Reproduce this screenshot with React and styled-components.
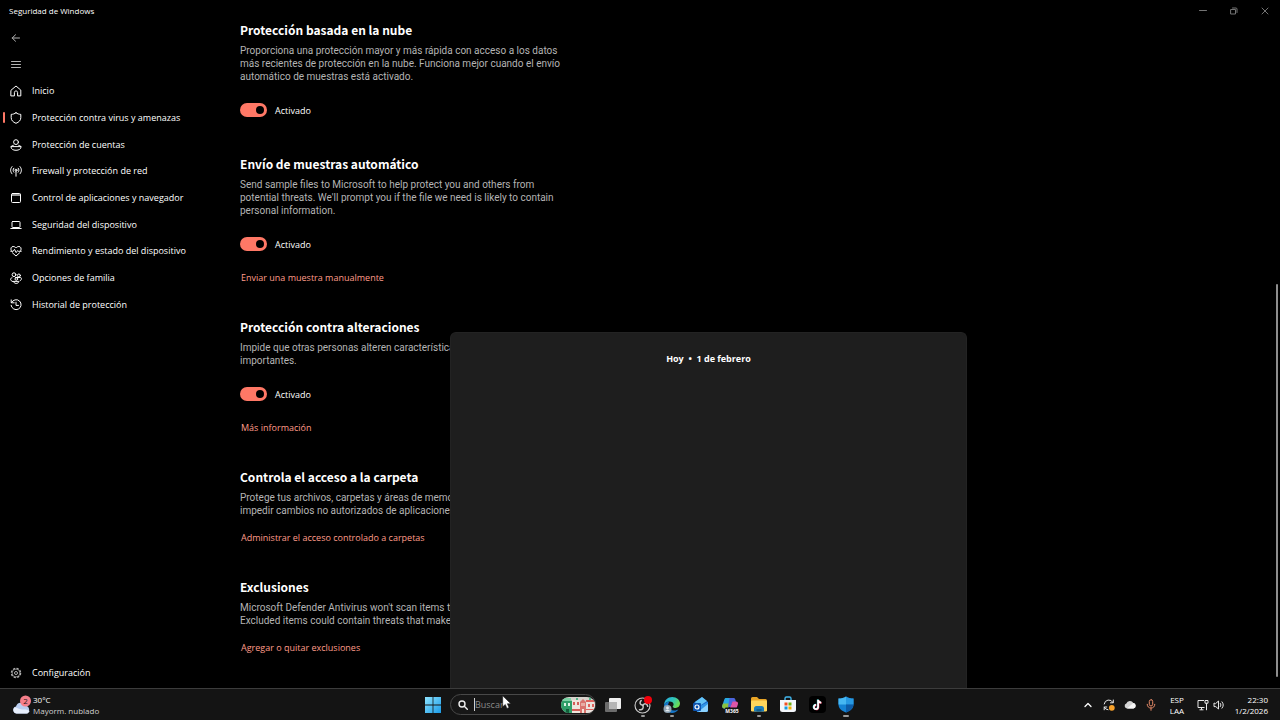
import React from "react";
import styled, { createGlobalStyle } from "styled-components";

const GlobalStyle = createGlobalStyle`
  *, *::before, *::after { box-sizing: border-box; }
  body {
    margin: 0;
    background: #000;
    color: #fff;
    font-family: "Open Sans", "Noto Sans", sans-serif;
    font-size: 9px;
  }
  button { font: inherit; color: inherit; background: none; border: 0; padding: 0; }
  h1, h2, p, ul { margin: 0; padding: 0; }
  ul { list-style: none; }
`;

const Desktop = styled.div`
  position: relative;
  display: flex;
  flex-direction: column;
  min-height: 100vh;
  overflow: hidden;
`;

const TitleBar = styled.header`
  display: flex;
  justify-content: space-between;
  align-items: center;
  height: 20px;
  padding-top: 2px;
`;

const WindowTitle = styled.h1`
  padding-left: 9px;
  font-size: 8px;
  line-height: 12px;
  font-weight: 500;
`;

const WindowControls = styled.div`
  display: flex;
`;

const WindowButton = styled.button`
  display: grid;
  place-items: center;
  width: 31px;
  height: 18px;
  color: #747474;
`;

const WindowBody = styled.div`
  flex: 1;
  display: grid;
  grid-template-columns: 240px minmax(0, 1fr) 4px;
`;

const Sidebar = styled.aside`
  display: flex;
  flex-direction: column;
  padding: 4px 0 2px;
`;

const SidebarButton = styled.button`
  display: flex;
  align-items: center;
  height: 27px;
  padding-left: 10px;
  color: #b4b4b4;
`;

const NavList = styled.ul`
  display: grid;
  grid-auto-rows: 1fr;
  height: 240px;
`;

const NavItem = styled.li`
  display: grid;
`;

const NavLink = styled.a`
  display: flex;
  align-items: center;
  gap: 10px;
  padding-left: ${(p) => (p.$active ? 3 : 10)}px;
  color: #fff;
  font-size: 9px;
  line-height: 14px;
  font-weight: 500;
  text-decoration: none;

  &::before {
    content: "";
    display: ${(p) => (p.$active ? "block" : "none")};
    width: 2px;
    height: 11px;
    margin-right: -5px;
    border-radius: 1px;
    background: #ff7866;
  }
`;

const SidebarFooter = styled.div`
  display: grid;
  height: 27px;
  margin-top: auto;
`;

const Content = styled.main`
  display: flex;
  flex-direction: column;
  gap: 32px;
  padding-bottom: 32px;
`;

const Section = styled.section`
  display: flex;
  flex-direction: column;
  align-items: flex-start;
`;

const SectionTitle = styled.h2`
  font-family: "Noto Sans CJK SC", "Noto Sans", sans-serif;
  font-size: 12px;
  line-height: 20px;
  font-weight: 600;
`;

const Description = styled.p`
  margin-top: 4px;
  color: #b4b4b4;
  font-family: Roboto, sans-serif;
  font-size: 10px;
  line-height: 13px;
  white-space: pre-line;
`;

const ToggleLabel = styled.label`
  display: flex;
  align-items: center;
  gap: 8px;
  height: 24px;
  margin-top: 15px;
  font-weight: 500;
`;

const ToggleInput = styled.input`
  appearance: none;
  display: flex;
  align-items: center;
  width: 27px;
  height: 14px;
  margin: 0;
  padding: 0 3px;
  border-radius: 7px;
  background: #ff7866;

  &::before {
    content: "";
    width: 8px;
    height: 8px;
    border-radius: 50%;
    background: #000;
  }
  &:checked::before { margin-left: auto; }
`;

const ActionLink = styled.a`
  margin-top: ${(p) => (p.$afterToggle ? 15 : 14)}px;
  padding-left: 1px;
  color: #ff9c8a;
  line-height: 14px;
  text-decoration: none;
`;

const ScrollRail = styled.div`
  display: grid;
  grid-template-rows: 264fr 393fr 11fr;
`;

const ScrollThumb = styled.div`
  grid-row: 2;
  width: 2px;
  border-radius: 1px;
  background: #8e8e8e;
`;

const Flyout = styled.aside`
  position: absolute;
  left: 450px;
  bottom: 32px;
  width: 517px;
  height: 356px;
  padding-top: 19px;
  border: 1px solid #232323;
  border-bottom: 0;
  border-radius: 6px 6px 0 0;
  background: #1e1e1e;
  text-align: center;
`;

const FlyoutTitle = styled.h2`
  font-size: 9px;
  line-height: 14px;
  font-weight: 700;
`;

const Taskbar = styled.footer`
  position: relative;
  display: grid;
  grid-template-columns: 1fr auto 1fr;
  align-items: center;
  height: 32px;
  border-top: 1px solid #3c3c3c;
  background: #141414;
`;

const Weather = styled.button`
  display: flex;
  align-items: center;
  justify-self: start;
  gap: 1px;
  padding-left: 12px;
  font-size: 8px;
  line-height: 11px;
  text-align: left;
`;

const WeatherTemp = styled.span`
  display: block;
  font-weight: 500;
`;

const WeatherState = styled.span`
  display: block;
  color: #d0d0d0;
`;

const TaskbarCenter = styled.div`
  display: flex;
  align-items: center;
  gap: 3px;
`;

const StartButton = styled.button`
  display: grid;
  place-items: center;
  width: 28px;
  height: 31px;
`;

const SearchBox = styled.label`
  display: flex;
  align-items: center;
  width: 146px;
  height: 21px;
  padding: 0 0 0 7px;
  border: 1px solid #484848;
  border-radius: 11px;
  background: #171717;
`;

const SearchInput = styled.input`
  flex: 1;
  min-width: 0;
  height: 13px;
  margin-left: 6px;
  padding: 0;
  border: 0;
  border-left: 1px solid #d0d0d0;
  outline: 0;
  background: none;
  color: #fff;
  font: inherit;

  &::placeholder { color: #8a8a8a; }
`;

const AppStrip = styled.div`
  display: grid;
  grid-template-columns: repeat(9, 1fr);
  width: 262px;
`;

const AppButton = styled.button`
  position: relative;
  display: grid;
  place-items: center;
  height: 31px;

  &::after {
    content: "";
    position: absolute;
    bottom: 3px;
    left: 50%;
    display: ${(p) => (p.$running ? "block" : "none")};
    width: ${(p) => (p.$focused ? 6 : 4)}px;
    height: 2px;
    margin-left: ${(p) => (p.$focused ? -3 : -2)}px;
    border-radius: 1px;
    background: #9a9a9a;
  }
`;

const Tray = styled.div`
  display: flex;
  align-items: center;
  justify-self: end;
  padding-right: 12px;
`;

const TrayButton = styled.button`
  display: grid;
  place-items: center;
  width: 21px;
  height: 24px;
`;

const Language = styled.button`
  width: 32px;
  font-size: 8px;
  line-height: 11px;
  text-align: center;
`;

const SystemButton = styled.button`
  display: flex;
  align-items: center;
  gap: 4px;
  padding-left: 4px;
`;

const Clock = styled.button`
  width: 43px;
  font-size: 8px;
  line-height: 11px;
  text-align: right;
  white-space: nowrap;
`;

const Pointer = styled.svg`
  position: absolute;
  left: 502px;
  bottom: 10px;
`;

const Glyph = ({ children, size = 12, box = 12 }) => (
  <svg width={size} height={size} viewBox={`0 0 ${box} ${box}`} fill="none" stroke="currentColor" strokeWidth="1" strokeLinecap="round" strokeLinejoin="round" aria-hidden="true">
    {children}
  </svg>
);

const glyphs = {
  back: <path d="M9.5 6H2.2M5.5 2.8 2.2 6l3.3 3.2" />,
  menu: <path d="M1.500 2.500h9M1.500 5.500h9M1.500 8.500h9" />,
  home: <path d="M1.200 5.100 6 1l4.800 4.100v5.800H7.600V7.400c0-.9-.6-1.400-1.600-1.400s-1.600.5-1.600 1.400v3.500H1.200z" />,
  shield: <path d="M6 .8C7.400 1.800 9 2.300 10.800 2.400v3.200c0 2.700-1.800 4.600-4.800 5.700C3 10.200 1.200 8.300 1.200 5.600V2.400C3 2.300 4.600 1.800 6 .8z" />,
  account: (
    <>
      <circle cx="6" cy="3.100" r="2.400" />
      <path d="M3.300 6.300C1.700 6.500 1 7.100 1 8c0 1.900 2 3.300 5 3.300S11 9.900 11 8c0-.9-.7-1.500-2.300-1.700M1.300 7.600h9.400" />
    </>
  ),
  network: (
    <>
      <circle cx="6" cy="5.200" r="1" />
      <path d="M6 6.200v5M3.800 3.200c-1 1.200-1 2.800 0 4M8.200 3.200c1 1.200 1 2.800 0 4M2 1.600c-1.900 2.200-1.900 5 0 7.200M10 1.600c1.900 2.200 1.900 5 0 7.200" />
    </>
  ),
  app: (
    <>
      <rect x="1.500" y="1.500" width="9" height="9" rx="1" />
      <path d="M1.500 2.500h9M1.500 3.500h9" strokeOpacity=".6" />
    </>
  ),
  device: (
    <>
      <rect x="2" y="2.500" width="8" height="6" rx=".7" />
      <path d="M.8 9.500h10.400" />
    </>
  ),
  health: (
    <path d="M1.200 5.500C.2 3.300 1.400 1.500 3.100 1.500c1.300 0 2.200.6 2.900 1.500.7-.9 1.600-1.500 2.900-1.500 1.700 0 2.900 1.800 1.900 4M2.400 7.800 6 11l3.600-3.200M.8 6.300h2.400l1.300-2 1.700 3.300L7.600 5.600l.7.700h2.900" />
  ),
  family: (
    <>
      <circle cx="4" cy="2.700" r="1.900" />
      <circle cx="8.900" cy="3.500" r="1.500" />
      <path d="M2 5.800C.9 6 .6 6.500.6 7.200c0 1.100.8 1.900 2 2.300M5.500 5.500h5c.5 0 .9.500.9 1.200 0 1-.5 1.700-1.300 2.100" />
      <circle cx="6.300" cy="7" r="1.300" />
      <path d="M3.600 9.400h5.200c0 1.200-1 2-2.600 2s-2.600-.8-2.600-2z" />
    </>
  ),
  history: <path d="M1.200.9v2.900h3M1.500 3.600a5 5 0 1 1-.4 2.700M6 3.200v3.200h2.500" />,
};

const GearGlyph = () => (
  <svg width="12" height="12" viewBox="0 0 12 12" fill="none" stroke="#b0b0b0" aria-hidden="true">
    <circle cx="6" cy="6" r="4.600" strokeWidth="1.300" strokeDasharray="2.200 1.410" />
    <circle cx="6" cy="6" r="3.900" strokeWidth=".7" />
    <circle cx="6" cy="6" r="1.500" strokeWidth="1" />
  </svg>
);

const WeatherIcon = () => (
  <svg width="20" height="20" viewBox="0 0 20 20" aria-hidden="true">
    <path d="M4.500 18.500a3.500 3.500 0 0 1-.5-6.900 5.200 5.200 0 0 1 9.800-.8 4 4 0 0 1 .7 7.700z" fill="#b9cdf0" />
    <path d="M4.500 18.500a3.500 3.500 0 0 1-1.800-6.300c3 .3 4 2 7.300 2.200 2.600.2 4.800-.5 7.600 1.500-.6 1.600-1.700 2.500-3.100 2.600z" fill="#e8effc" />
    <circle cx="13.500" cy="6" r="5.500" fill="#f57f8b" />
    <text x="13.500" y="9" textAnchor="middle" fontSize="8" fill="#29161a">2</text>
  </svg>
);

const WindowsLogo = () => (
  <svg width="16" height="16" viewBox="0 0 16 16" aria-hidden="true">
    <defs>
      <linearGradient id="win" x1="0" y1="0" x2="1" y2="1">
        <stop offset="0" stopColor="#8ee4ff" />
        <stop offset="1" stopColor="#1a9be8" />
      </linearGradient>
    </defs>
    <path d="M0 0h7.600v7.600H0zM8.400 0H16v7.600H8.400zM0 8.400h7.600V16H0zM8.400 8.400H16V16H8.400z" fill="url(#win)" />
  </svg>
);

const SearchArt = () => (
  <svg width="34" height="16" viewBox="0 0 34 16" aria-hidden="true">
    <defs>
      <clipPath id="pill"><rect width="34" height="16" rx="8" /></clipPath>
    </defs>
    <g clipPath="url(#pill)">
      <rect width="34" height="16" fill="#d8d3cd" />
      <path d="M0 5 5 1l6 3v12H0z" fill="#2f9e69" />
      <path d="M0 1h10v3H0z" fill="#7bd3a5" />
      <path d="M3 6h2v3H3zM7 6h2v3H7z" fill="#d9f2e2" />
      <path d="M5 12h3v4H5z" fill="#145e3c" />
      <path d="M11 3h8v13h-8z" fill="#eee6dd" />
      <path d="M12 5h2v3h-2zM16 5h2v3h-2zM11 12h8v2h-8z" fill="#d35f59" />
      <path d="M19 5l3-3 3 3v11h-6z" fill="#d9736e" />
      <path d="M20.500 6h1v3h-1zM22.500 6h1v3h-1zM21 12h2v4h-2z" fill="#f4e6da" />
      <path d="M25 4h9v12h-9z" fill="#ece2dc" />
      <path d="M25 3h9v2h-9zM27 7h2v3h-2zM31 7h2v3h-2zM25 12h9v1h-9z" fill="#df625d" />
      <path d="M15 1h2v2h-2zM28 0h2v3h-2z" fill="#55b58a" />
    </g>
  </svg>
);

const TaskViewIcon = () => (
  <svg width="17" height="16" viewBox="0 0 17 16" aria-hidden="true">
    <rect x="0" y="5" width="12" height="10" rx="1" fill="#6c6c6c" />
    <rect x="4" y="1" width="12" height="11" rx="1" fill="#eee" />
    <path d="M4 5h8v7H4z" fill="#b5b5b5" />
  </svg>
);

const ObsIcon = () => (
  <svg width="18" height="18" viewBox="0 0 18 18" aria-hidden="true">
    <circle cx="8.500" cy="9.500" r="7.500" fill="#151515" stroke="#cfcfcf" strokeWidth="1.100" />
    <g fill="none" stroke="#c7c7c7" strokeWidth="1.500" strokeLinecap="round">
      <path d="M8.800 9.300C5.800 9 5.200 6.500 7.200 4.500" />
      <path d="M8.800 9.300C10.500 6.800 13 7.500 13.700 10.300" />
      <path d="M8.800 9.300C10.200 12 8.200 14.300 5.500 13.700" />
    </g>
    <circle cx="14" cy="4" r="4" fill="#f3000b" />
  </svg>
);

const EdgeIcon = () => (
  <svg width="18" height="18" viewBox="0 0 18 18" aria-hidden="true">
    <defs>
      <linearGradient id="edgeA" x1="0" y1="0" x2="1" y2=".5">
        <stop offset="0" stopColor="#27a8e8" />
        <stop offset=".55" stopColor="#2fc5b9" />
        <stop offset="1" stopColor="#6bdc52" />
      </linearGradient>
    </defs>
    <path d="M1 9C1.300 4.200 4.800 1 9.200 1c4.700 0 7.800 3.200 7.800 6.600 0 2.800-2 4.400-4.400 4.400-1.900 0-2.900-.7-2.900-1.500 0-.7.900-.9.900-2.100 0-1.600-1.600-2.900-3.900-2.900C4 5.500 2 6.800 1 9z" fill="url(#edgeA)" />
    <path d="M1 9c1-2.200 3-3.500 5.600-3.500C5.500 6.800 5 8.300 5.300 10c.5 3 3 4.800 6.300 4.600 1.500-.1 2.900-.7 4-1.300-1.500 2.400-3.900 3.700-6.600 3.700-4.600 0-8.200-3.500-8-8z" fill="#1576c8" />
    <circle cx="4.500" cy="13" r="4" fill="#91a4b3" />
    <circle cx="4.500" cy="12" r="1.400" fill="#e6edf2" />
    <path d="M2.200 15.300c.4-2 4.200-2 4.600 0" fill="#e6edf2" />
  </svg>
);

const OutlookIcon = () => (
  <svg width="17" height="17" viewBox="0 0 17 17" aria-hidden="true">
    <path d="M2 6.500 10 1l6 5v8a2 2 0 0 1-2 2H5z" fill="#1966c8" />
    <path d="M3 6 10 1l5 4-9 6z" fill="#65c5f7" />
    <path d="M6 11l10-5v8a2 2 0 0 1-2 2H5z" fill="#3196e8" />
    <path d="M6 16 16 8v6a2 2 0 0 1-2 2z" fill="#8bd2ff" />
    <rect x="1" y="7" width="8" height="8" rx="1" fill="#0e54ae" />
    <circle cx="5" cy="11" r="2" fill="none" stroke="#fff" strokeWidth="1.200" />
  </svg>
);

const CopilotIcon = () => (
  <svg width="18" height="18" viewBox="0 0 18 18" aria-hidden="true">
    <path d="M5 2h5.500L7.200 12.500H3.500C1.500 12.500.8 11 1.300 9.500L3.200 3.800C3.600 2.600 4 2 5 2z" fill="#28a9e3" />
    <path d="M2 7.500h6.500L7 12.500H3.500C1.500 12.500.8 11 1.300 9.500z" fill="#8ac23f" />
    <path d="M8.500 2h4c1 0 1.600.7 1.900 1.700L15 6h-3.500L9.800 11H7z" fill="#4b65dd" />
    <path d="M11.500 5.500H15c1.600 0 2.400 1.200 1.900 2.700l-1.400 4.300H8.800z" fill="#df55a7" />
    <rect x="4" y="11.500" width="14" height="6" rx="1" fill="#141414" />
    <text x="11" y="17" textAnchor="middle" fontSize="5" fontWeight="700" fill="#fff">M365</text>
  </svg>
);

const ExplorerIcon = () => (
  <svg width="18" height="17" viewBox="0 0 18 17" aria-hidden="true">
    <path d="M1 2.500A1.500 1.500 0 0 1 2.500 1H7l2 2h6.500A1.500 1.500 0 0 1 17 4.500V7H1z" fill="#e9a526" />
    <rect x="1" y="4.500" width="16" height="11" rx="1.300" fill="#ffd65c" />
    <path d="M4 15.500v-3.200C4 11 5 10 6.300 10h5.400c1.300 0 2.300 1 2.300 2.300v3.200z" fill="#1d7dba" />
    <path d="M6.500 13h5v2.500h-5z" fill="#14608f" />
  </svg>
);

const StoreIcon = () => (
  <svg width="16" height="17" viewBox="0 0 16 17" aria-hidden="true">
    <path d="M5 4V2.500A1.500 1.500 0 0 1 6.500 1h3A1.500 1.500 0 0 1 11 2.500V4" fill="none" stroke="#41b7ee" strokeWidth="1.400" />
    <path d="M0 4h16v9.500A2.500 2.500 0 0 1 13.500 16h-11A2.500 2.500 0 0 1 0 13.500z" fill="#f3f6fa" />
    <path d="M4.500 6.500h3v3h-3z" fill="#f25022" />
    <path d="M8.500 6.500h3v3h-3z" fill="#6fae12" />
    <path d="M4.500 10.500h3v3h-3z" fill="#159adf" />
    <path d="M8.500 10.500h3v3h-3z" fill="#f2ac00" />
  </svg>
);

const TikTokIcon = () => (
  <svg width="17" height="17" viewBox="0 0 17 17" aria-hidden="true">
    <rect width="17" height="17" rx="4" fill="#000" />
    <g fill="none" strokeWidth="1.700">
      <path d="M8.700 3.500v7.300a2.100 2.100 0 1 1-2-2.100M8.700 3.700c.2 1.600 1.400 2.600 3.100 2.700" stroke="#2bdcd8" />
      <path d="M9.500 4v7.300a2.100 2.100 0 1 1-2-2.100M9.500 4.200c.2 1.600 1.400 2.600 3.100 2.700" stroke="#f33b61" />
      <path d="M9.100 3.700V11A2.100 2.100 0 1 1 7 8.900M9.100 3.900c.2 1.600 1.400 2.600 3.100 2.700" stroke="#fff" />
    </g>
  </svg>
);

const DefenderIcon = () => (
  <svg width="16" height="17" viewBox="0 0 16 17" aria-hidden="true">
    <path d="M8 .5c2 1.400 4.500 2 7.500 2v5.700c0 4-2.800 6.600-7.500 8.300C3.300 14.800.5 12.200.5 8.200V2.500C3.500 2.500 6 1.900 8 .5z" fill="#1482d4" />
    <path d="M8 .5v8H.5v-6C3.500 2.500 6 1.900 8 .5z" fill="#46b7f2" />
    <path d="M8 .5c2 1.400 4.500 2 7.500 2v6H8z" fill="#2799e3" />
    <path d="M8 8.500h7.500c-.2 3.800-3 6.400-7.500 8z" fill="#0d5ca8" />
  </svg>
);

const apps = [
  { name: "Vista de tareas", Icon: TaskViewIcon },
  { name: "OBS Studio", Icon: ObsIcon, running: true },
  { name: "Microsoft Edge", Icon: EdgeIcon, running: true },
  { name: "Outlook", Icon: OutlookIcon },
  { name: "Microsoft 365 Copilot", Icon: CopilotIcon },
  { name: "Explorador de archivos", Icon: ExplorerIcon, running: true },
  { name: "Microsoft Store", Icon: StoreIcon },
  { name: "TikTok", Icon: TikTokIcon },
  { name: "Seguridad de Windows", Icon: DefenderIcon, running: true, focused: true },
];

const navItems = [
  { icon: "home", label: "Inicio" },
  { icon: "shield", label: "Protección contra virus y amenazas", active: true },
  { icon: "account", label: "Protección de cuentas" },
  { icon: "network", label: "Firewall y protección de red" },
  { icon: "app", label: "Control de aplicaciones y navegador" },
  { icon: "device", label: "Seguridad del dispositivo" },
  { icon: "health", label: "Rendimiento y estado del dispositivo" },
  { icon: "family", label: "Opciones de familia" },
  { icon: "history", label: "Historial de protección" },
];

const sections = [
  {
    title: "Protección basada en la nube",
    text: "Proporciona una protección mayor y más rápida con acceso a los datos\nmás recientes de protección en la nube. Funciona mejor cuando el envío\nautomático de muestras está activado.",
    toggle: true,
  },
  {
    title: "Envío de muestras automático",
    text: "Send sample files to Microsoft to help protect you and others from\npotential threats. We'll prompt you if the file we need is likely to contain\npersonal information.",
    toggle: true,
    link: "Enviar una muestra manualmente",
  },
  {
    title: "Protección contra alteraciones",
    text: "Impide que otras personas alteren características\nimportantes.",
    toggle: true,
    link: "Más información",
  },
  {
    title: "Controla el acceso a la carpeta",
    text: "Protege tus archivos, carpetas y áreas de memoria\nimpedir cambios no autorizados de aplicaciones",
    link: "Administrar el acceso controlado a carpetas",
  },
  {
    title: "Exclusiones",
    text: "Microsoft Defender Antivirus won't scan items that\nExcluded items could contain threats that make",
    link: "Agregar o quitar exclusiones",
  },
];

function SettingSection({ title, text, toggle, link }) {
  return (
    <Section>
      <SectionTitle>{title}</SectionTitle>
      <Description>{text}</Description>
      {toggle && (
        <ToggleLabel>
          <ToggleInput type="checkbox" role="switch" defaultChecked />
          Activado
        </ToggleLabel>
      )}
      {link && <ActionLink href="#" $afterToggle={toggle}>{link}</ActionLink>}
    </Section>
  );
}

export default function App() {
  return (
    <Desktop>
      <GlobalStyle />
      <TitleBar>
        <WindowTitle>Seguridad de Windows</WindowTitle>
        <WindowControls>
          <WindowButton aria-label="Minimizar"><Glyph size={8} box={8}><path d="M.5 3.500h7" /></Glyph></WindowButton>
          <WindowButton aria-label="Restaurar">
            <Glyph size={8} box={8}><path d="M1 2.500h4.500V7H1zM2.500 1H6c.6 0 1 .4 1 1v3.500" /></Glyph>
          </WindowButton>
          <WindowButton aria-label="Cerrar"><Glyph size={8} box={8}><path d="m1 1 6 6M7 1 1 7" /></Glyph></WindowButton>
        </WindowControls>
      </TitleBar>

      <WindowBody>
        <Sidebar>
          <SidebarButton aria-label="Atrás"><Glyph>{glyphs.back}</Glyph></SidebarButton>
          <SidebarButton aria-label="Menú"><Glyph>{glyphs.menu}</Glyph></SidebarButton>
          <nav>
            <NavList>
              {navItems.map((item) => (
                <NavItem key={item.label}>
                  <NavLink href="#" $active={item.active}>
                    <Glyph>{glyphs[item.icon]}</Glyph>
                    {item.label}
                  </NavLink>
                </NavItem>
              ))}
            </NavList>
          </nav>
          <SidebarFooter>
            <NavLink href="#"><GearGlyph />Configuración</NavLink>
          </SidebarFooter>
        </Sidebar>
        <Content>
          {sections.map((s) => <SettingSection key={s.title} {...s} />)}
        </Content>
        <ScrollRail><ScrollThumb /></ScrollRail>
      </WindowBody>

      <Flyout>
        <FlyoutTitle>Hoy&nbsp; •&nbsp; 1 de febrero</FlyoutTitle>
      </Flyout>

      <Taskbar>
        <Weather>
          <WeatherIcon />
          <span>
            <WeatherTemp>30°C</WeatherTemp>
            <WeatherState>Mayorm. nublado</WeatherState>
          </span>
        </Weather>
        <TaskbarCenter>
          <StartButton aria-label="Inicio"><WindowsLogo /></StartButton>
          <SearchBox>
            <svg width="10" height="10" viewBox="0 0 10 10" fill="none" stroke="#eee" strokeWidth="1.400" strokeLinecap="round" aria-hidden="true">
              <circle cx="4" cy="4" r="3" /><path d="m6.300 6.300 3 3" />
            </svg>
            <SearchInput type="text" placeholder="Buscar" aria-label="Buscar" />
            <SearchArt />
          </SearchBox>
          <AppStrip>
            {apps.map(({ name, Icon, running, focused }) => (
              <AppButton key={name} aria-label={name} $running={running} $focused={focused}><Icon /></AppButton>
            ))}
          </AppStrip>
        </TaskbarCenter>
        <Tray>
          <TrayButton aria-label="Iconos ocultos"><Glyph size={8} box={8}><path d="M1 5.500 4 2.500l3 3" strokeWidth="1.300" /></Glyph></TrayButton>
          <TrayButton aria-label="Actualización">
            <svg width="12" height="12" viewBox="0 0 12 12" fill="none" stroke="#e6e6e6" strokeLinecap="round" aria-hidden="true">
              <path d="M1.200 5A4.700 4.700 0 0 1 10 3.500M10.300 1v2.800H7.500M1.200 8.200A4.700 4.700 0 0 0 5 10.800M1.200 10.800V8h2.600" />
              <circle cx="8.800" cy="8.800" r="2.900" fill="#f7a12a" stroke="none" />
            </svg>
          </TrayButton>
          <TrayButton aria-label="OneDrive">
            <svg width="12" height="9" viewBox="0 0 12 9" aria-hidden="true">
              <path d="M3 8.500A2.600 2.600 0 0 1 2.300 3.500 3.900 3.900 0 0 1 9.300 3a2.800 2.800 0 0 1 .2 5.500z" fill="#d4d4d4" />
              <path d="M3 8.500 9.300 3a2.800 2.800 0 0 1 .2 5.500z" fill="#f6f6f6" />
            </svg>
          </TrayButton>
          <TrayButton aria-label="Micrófono">
            <svg width="10" height="12" viewBox="0 0 10 12" fill="none" stroke="#e58a68" strokeLinecap="round" aria-hidden="true">
              <rect x="3.300" y=".7" width="3.400" height="6.300" rx="1.700" />
              <path d="M1.200 5.300c0 2.300 1.500 3.700 3.800 3.700s3.800-1.400 3.800-3.700M5 9v2.300" />
            </svg>
          </TrayButton>
          <Language>ESP<br />LAA</Language>
          <SystemButton aria-label="Red y volumen">
            <svg width="12" height="12" viewBox="0 0 12 12" fill="none" stroke="#e6e6e6" aria-hidden="true">
              <path d="M7 1.500H1v7h6.500M2.500 10.800h4M4.500 8.500v2.300M8 1.500h3v2.700H8zM9.500 4.200v7" />
            </svg>
            <svg width="12" height="12" viewBox="0 0 12 12" fill="none" stroke="#e6e6e6" strokeLinecap="round" strokeLinejoin="round" aria-hidden="true">
              <path d="M1 4.400v3.200h1.800L5.500 10V2L2.800 4.400zM7.300 4.400c.8 1 .8 2.200 0 3.200M9 2.800c1.700 2 1.700 4.400 0 6.400" />
            </svg>
          </SystemButton>
          <Clock>22:30<br />1/2/2026</Clock>
        </Tray>
        <Pointer width="10" height="15" viewBox="0 0 10 15" aria-hidden="true">
          <path d="M.7.800v11l2.600-2.400 1.700 4 2-.9-1.700-3.800h3.500z" fill="#fff" stroke="#111" strokeWidth=".5" />
        </Pointer>
      </Taskbar>
    </Desktop>
  );
}
